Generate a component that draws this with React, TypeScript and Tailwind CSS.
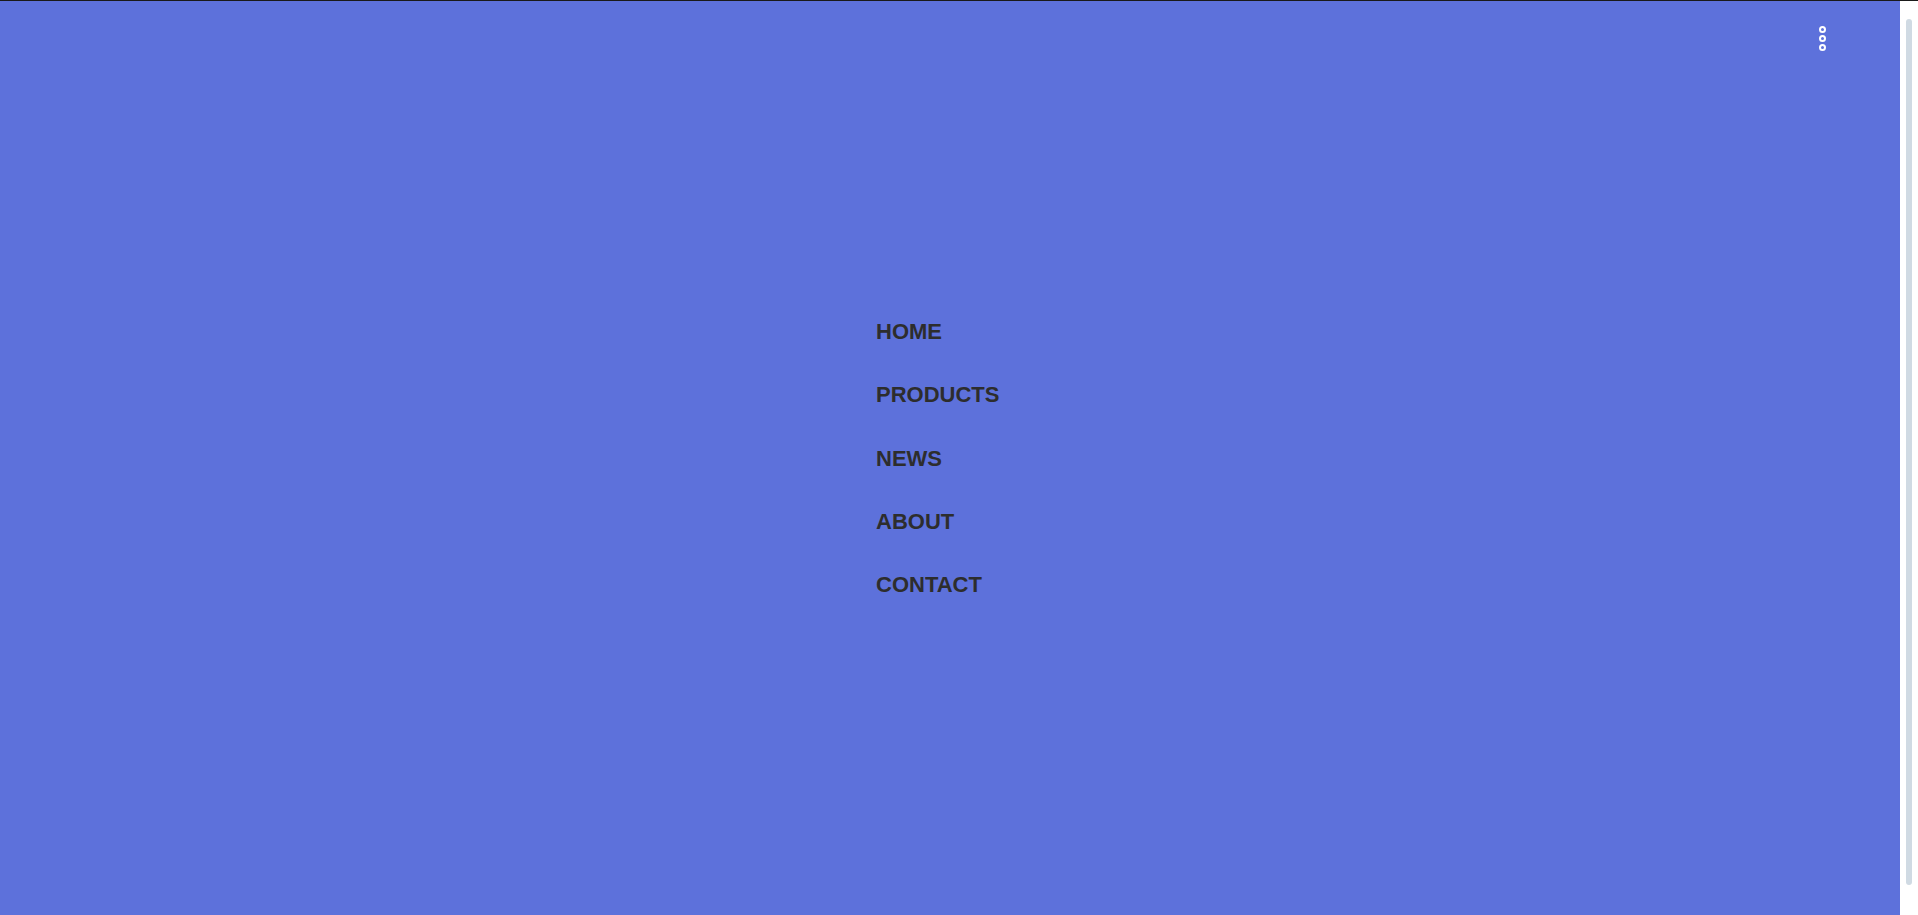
import React from "react";

const items = ["HOME", "PRODUCTS", "NEWS", "ABOUT", "CONTACT"];

export default function App() {
  return (
    <div
      className="flex h-[915px] w-[1918px] flex-col overflow-hidden bg-white"
      style={{ fontFamily: '"Liberation Sans", Arial, sans-serif' }}
    >
      <div className="h-px w-full bg-[#1a1a1a]" />
      <div className="flex flex-1">
        <main className="relative flex w-[1900px] items-center bg-[#5d71db] pl-[876px]">
          <nav>
            <ul className="flex flex-col">
              {items.map((t) => (
                <li
                  key={t}
                  className="flex h-[63.25px] items-center text-[22px] font-bold leading-[25px] text-[#2d2d2d]"
                >
                  {t}
                </li>
              ))}
            </ul>
          </nav>
          <button className="absolute right-[74px] top-[25px] flex flex-col items-center gap-[2px]">
            <span className="h-[7px] w-[7px] rounded-full border-2 border-white" />
            <span className="h-[7px] w-[7px] rounded-full border-2 border-white" />
            <span className="h-[7px] w-[7px] rounded-full border-2 border-white" />
          </button>
        </main>
        <div className="flex w-[18px] justify-start bg-white pl-[6px] pt-[18px] pb-[30px]">
          <div className="h-full w-[6px] rounded-full bg-[#d0dae3]" />
        </div>
      </div>
    </div>
  );
}
